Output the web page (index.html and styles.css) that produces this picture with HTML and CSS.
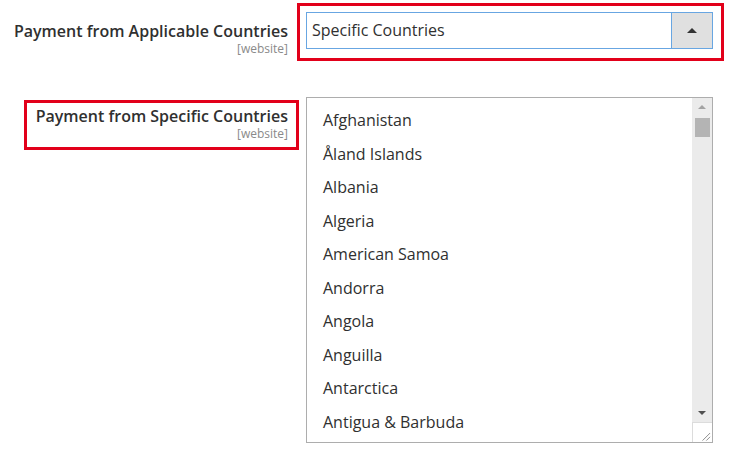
FILE: index.html
```html
<!DOCTYPE html>
<html lang="en">
<head>
  <meta charset="UTF-8">
  <title>Payment Countries</title>
  <link rel="stylesheet" href="styles.css">
</head>
<body>
  <div class="row row-applicable">
    <div class="label-col">
      <div class="label">Payment from Applicable Countries</div>
      <div class="scope">[website]</div>
    </div>
    <div class="highlight control-hl">
      <div class="select">
        <span class="select-value">Specific Countries</span>
        <span class="select-btn"><span class="arrow-up"></span></span>
      </div>
    </div>
  </div>

  <div class="row row-specific">
    <div class="label-col">
      <div class="highlight label-hl">
        <div class="label">Payment from Specific Countries</div>
        <div class="scope">[website]</div>
      </div>
    </div>
    <div class="listbox">
      <ul class="options">
        <li>Afghanistan</li>
        <li>Åland Islands</li>
        <li>Albania</li>
        <li>Algeria</li>
        <li>American Samoa</li>
        <li>Andorra</li>
        <li>Angola</li>
        <li>Anguilla</li>
        <li>Antarctica</li>
        <li>Antigua &amp; Barbuda</li>
      </ul>
      <div class="scrollbar">
        <span class="sb-up"></span>
        <span class="sb-thumb"></span>
        <span class="sb-track"></span>
        <span class="sb-down"></span>
        <span class="sb-corner">
          <svg width="20" height="20" viewBox="0 0 20 20">
            <path d="M10 18 L18 10 M14 18 L18 14" stroke="#8a8a8a" stroke-width="1" fill="none"/>
          </svg>
        </span>
      </div>
    </div>
  </div>
</body>
</html>
```

FILE: styles.css
```css
* {
  padding: 0;
  margin: 0;
  box-sizing: border-box;
}
body {
  background-color: #fff;
  width: 735px;
  height: 461px;
  overflow: hidden;
  color: #303030;
  font-family: "Open Sans", Arial, sans-serif;
}
.row {
  display: flex;
  align-items: flex-start;
}
.row-applicable {
  margin-top: 3px;
}
.row-specific {
  margin-top: 36px;
}
.label-col {
  width: 297px;
  display: flex;
  flex-direction: column;
  align-items: flex-end;
  text-align: right;
}
.row-applicable .label-col {
  padding: 19px 9px 0 0;
}
.label {
  font-size: 16px;
  font-weight: 600;
  line-height: 18px;
}
.scope {
  font-size: 12px;
  color: #8a8a8a;
  line-height: 15px;
  margin-top: 1px;
}
.highlight {
  border: 3px solid #e2001a;
}
.control-hl {
  width: 427px;
  padding: 6px 8px 9px 6px;
}
.label-hl {
  margin-top: 3px;
  margin-right: -2px;
  padding: 4px 8px 6px 9px;
}
.select {
  display: flex;
  height: 37px;
  border: 1px solid #68a6e2;
  background-color: #fff;
}
.select-value {
  flex: 1;
  font-size: 16px;
  line-height: 35px;
  padding-left: 5px;
}
.select-btn {
  width: 41px;
  border-left: 1px solid #68a6e2;
  background-color: #e0e0e0;
  display: flex;
  align-items: center;
  justify-content: center;
}
.arrow-up {
  width: 0;
  height: 0;
  border-left: 5px solid transparent;
  border-right: 5px solid transparent;
  border-bottom: 5px solid #333;
}
.listbox {
  display: flex;
  margin-left: 9px;
  width: 407px;
  height: 346px;
  border: 1px solid #adadad;
  background-color: #fff;
}
.options {
  flex: 1;
  list-style: none;
  padding-top: 6px;
  overflow: hidden;
}
.options li {
  height: 33.5px;
  line-height: 33.5px;
  padding-left: 16px;
  font-size: 16px;
}
.scrollbar {
  width: 20px;
  background-color: #ebebeb;
  display: flex;
  flex-direction: column;
  align-items: center;
}
.sb-up,
.sb-down {
  height: 18px;
  width: 20px;
  position: relative;
}
.sb-up::after,
.sb-down::after {
  content: "";
  position: absolute;
  left: 6px;
  top: 7px;
  border-left: 4px solid transparent;
  border-right: 4px solid transparent;
}
.sb-up::after {
  border-bottom: 4px solid #a3a3a3;
}
.sb-down::after {
  border-top: 4px solid #505050;
}
.sb-thumb {
  width: 15px;
  height: 19px;
  margin-top: 2px;
  background-color: #b4b4b4;
}
.sb-track {
  flex: 1;
}
.sb-corner {
  width: 20px;
  height: 20px;
  background-color: #fff;
  border-top: 1px solid #dcdcdc;
  border-left: 1px solid #dcdcdc;
  display: flex;
}
```
